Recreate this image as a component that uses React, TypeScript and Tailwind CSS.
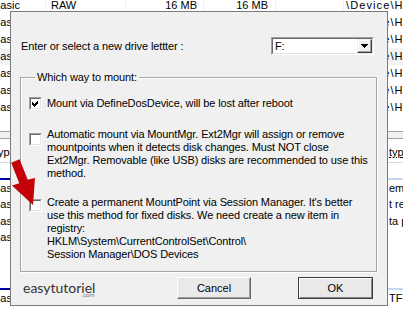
import * as React from "react"

const topRows = [
  { fs: "RAW", size: "16 MB", used: "16 MB", dev: "\\Device\\HarddiskVolume1" },
  { fs: "NTFS", size: "100 MB", used: "28 MB", dev: "\\Device\\HarddiskVolume2" },
  { fs: "NTFS", size: "118 GB", used: "62 GB", dev: "\\Device\\HarddiskVolume3" },
  { fs: "NTFS", size: "521 MB", used: "87 MB", dev: "\\Device\\HarddiskVolume4" },
  { fs: "EXT4", size: "40 GB", used: "12 GB", dev: "\\Device\\HarddiskVolume5" },
  { fs: "EXT4", size: "8 GB", used: "2 GB", dev: "\\Device\\HarddiskVolume6" },
  { fs: "FAT32", size: "4 GB", used: "1 GB", dev: "\\Device\\HarddiskVolume7" },
]

const lowerRows = ["em", "t re", "ta p", ""]

function CheckBox({ checked, className }: { checked?: boolean; className?: string }) {
  return (
    <span
      className={`flex h-[13px] w-[13px] shrink-0 border border-t-[#a0a0a0] border-l-[#a0a0a0] border-r-white border-b-white ${className ?? ""}`}
    >
      <span className="flex flex-1 items-center justify-center border border-t-[#696969] border-l-[#696969] border-r-[#e3e3e3] border-b-[#e3e3e3] bg-white">
        {checked && (
          <svg width="7" height="7" viewBox="0 0 7 7" shapeRendering="crispEdges">
            <path d="M0 2 L2 4 L6 0 L6 3 L2 7 L0 5 Z" fill="#000" />
          </svg>
        )}
      </span>
    </span>
  )
}

export default function App() {
  return (
    <div className="relative h-[317px] w-[403px] overflow-hidden bg-white font-[family-name:'Liberation_Sans',Arial,sans-serif] text-[11px] leading-[13px] text-black">
      {/* volume list behind the dialog */}
      <div className="-mt-[3px] flex flex-col">
        {topRows.map((r, i) => (
          <div key={i} className={`flex h-[17px] items-center whitespace-nowrap ${i === 3 ? "bg-[#f3f3f3]" : ""}`}>
            <div className="w-[45px] overflow-hidden">
              <span className="-ml-[7px] block">Basic</span>
            </div>
            <div className="h-full w-[80px] border-l border-[#f0f0f0] pt-[2px] pl-[5px]">{r.fs}</div>
            <div className="h-full w-[78px] border-l border-[#f0f0f0] pt-[2px] pr-[6px] text-right">{r.size}</div>
            <div className="h-full w-[72px] border-l border-[#f0f0f0] pt-[2px] pr-[7px] text-right">{r.used}</div>
            <div className="h-full w-[68px] border-l border-[#f0f0f0]" />
            <div className="h-full flex-1 overflow-hidden border-l border-[#f0f0f0] pt-[2px] pl-[2px] tracking-[1.1px]">{r.dev}</div>
          </div>
        ))}
      </div>

      {/* splitter + lower pane */}
      <div className="mt-[15px] h-[8px] border-y border-[#a0a0a0] bg-[#f0f0f0]" />
      <div className="mt-[4px] flex h-[20px] items-center justify-between border-b border-[#d8d8d8] whitespace-nowrap">
        <span className="-ml-[8px]">Type</span>
        <span className="w-[14px] overflow-hidden underline">type</span>
      </div>
      <div className="mt-[15px] flex h-[2px]">
        <div className="w-[12px] bg-[#0000a8]" />
        <div className="ml-auto w-[15px] bg-[#c4d8f0]" />
      </div>
      <div className="flex flex-col">
        {lowerRows.map((t, i) => (
          <div key={i} className="flex h-[16.5px] items-center justify-between whitespace-nowrap">
            <div className="w-[45px] overflow-hidden">
              <span className="-ml-[7px] block">Basic</span>
            </div>
            <span className="w-[14px] overflow-hidden">{t}</span>
          </div>
        ))}
      </div>
      <div className="mt-[42px] flex h-[2px]">
        <div className="w-[12px] bg-[#0000a8]" />
        <div className="ml-auto w-[15px] bg-[#c4d8f0]" />
      </div>
      <div className="flex h-[17px] items-center justify-between whitespace-nowrap">
        <div className="w-[45px] overflow-hidden">
          <span className="-ml-[7px] block">Basic</span>
        </div>
        <span className="w-[14px] overflow-hidden">TFS</span>
      </div>

      {/* mount dialog */}
      <div className="absolute top-[11px] left-[10px] flex h-[295px] w-[378px] flex-col border border-[#7a7a7a] bg-[#f0f0f0] pt-[25px] pb-[5px] tracking-[-0.12px] whitespace-nowrap">
        <div className="flex h-[18px] items-center justify-between pr-[13px] pl-[10px]">
          <span>Enter or select a new drive lettter :</span>
          <div className="flex h-[18px] w-[103px] border border-t-[#a0a0a0] border-l-[#a0a0a0] border-r-white border-b-white">
            <div className="flex flex-1 items-center border border-t-[#696969] border-l-[#696969] border-r-[#e3e3e3] border-b-[#e3e3e3] bg-white pl-[2px]">
              <span className="flex-1">F:</span>
              <span className="flex h-[14px] w-[15px] items-center justify-center border border-t-[#f0f0f0] border-l-[#f0f0f0] border-r-[#404040] border-b-[#404040] bg-[#f0f0f0] shadow-[inset_-1px_-1px_0_#a0a0a0,inset_1px_1px_0_#fff]">
                <svg width="7" height="4" viewBox="0 0 7 4" shapeRendering="crispEdges">
                  <path d="M0 0 H7 L3.5 4 Z" fill="#000" />
                </svg>
              </span>
            </div>
          </div>
        </div>

        <fieldset className="mt-[16px] mr-[13px] ml-[9px] h-[201px] border border-[#a6a6a6] px-[8px] shadow-[inset_1px_1px_0_#fff,1px_1px_0_#fff]">
          <legend className="ml-[6px] px-[2px]">Which way to mount:</legend>

          <label className="mt-[13px] flex items-center gap-[5px]">
            <CheckBox checked />
            <span>Mount via DefineDosDevice, will be lost after reboot</span>
          </label>

          <label className="mt-[18px] flex items-start gap-[5px]">
            <CheckBox className="mt-[5px]" />
            <span>
              Automatic mount via MountMgr. Ext2Mgr will assign or remove
              <br />
              mountpoints when it detects disk changes. Must NOT close
              <br />
              Ext2Mgr. Removable (like USB) disks are recommended to use this
              <br />
              method.
            </span>
          </label>

          <label className="mt-[16px] flex items-start gap-[5px]">
            <CheckBox className="mt-[3px]" />
            <span>
              Create a permanent MountPoint via Session Manager. It's better
              <br />
              use this method for fixed disks. We need create a new item in
              <br />
              registry:
              <br />
              HKLM\System\CurrentControlSet\Control\
              <br />
              Session Manager\DOS Devices
            </span>
          </label>
        </fieldset>

        <div className="mt-[5px] flex h-[22px] items-center pr-[14px] pl-[12px] tracking-normal">
          <span className="relative font-[family-name:Lato,sans-serif] text-[14px] leading-[16px] text-[#333]">
            easytutoriel
            <span className="absolute top-[12px] right-[1px] text-[6px] leading-[6px] text-[#777]">.com</span>
          </span>
          <button className="ml-auto h-[22px] w-[74px] border border-t-white border-l-white border-r-[#696969] border-b-[#696969] bg-[#e9e9e9] shadow-[inset_-1px_-1px_0_#a0a0a0]">
            Cancel
          </button>
          <button className="ml-[47px] h-[22px] w-[75px] border border-[#3a3a3a] bg-[#e9e9e9] shadow-[inset_1px_1px_0_#fff,inset_-1px_-1px_0_#8a8a8a]">
            OK
          </button>
        </div>
      </div>

      {/* red pointer arrow */}
      <svg className="pointer-events-none absolute top-0 left-0" width="60" height="220" viewBox="0 0 60 220">
        <polygon
          points="11.2,162.7 19.6,159.3 27.7,179.8 35,178 33,205 12,185.5 19.3,183.2"
          fill="#c4000a"
        />
      </svg>
    </div>
  )
}
